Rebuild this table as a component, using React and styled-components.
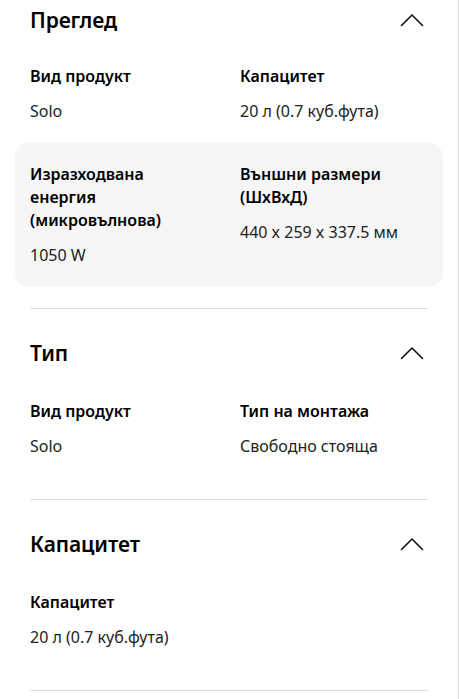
import React from 'react';
import styled, { createGlobalStyle } from 'styled-components';

const GlobalStyle = createGlobalStyle`
  html, body {
    margin: 0;
    padding: 0;
    background: #fff;
  }
  body {
    font-family: "Noto Sans", "Open Sans", Arial, sans-serif;
    color: #000;
  }
`;

const Page = styled.div`
  width: 459px;
  min-height: 699px;
  box-sizing: border-box;
  border-right: 1px solid #e2e2e2;
  padding: 0 30px;
`;

const Section = styled.section`
  padding-top: ${(p) => (p.$first ? '0' : '24px')};
  padding-bottom: 21px;
  border-bottom: 1px solid #dcdcdc;
`;

const Header = styled.div`
  display: flex;
  align-items: center;
  justify-content: space-between;
  height: 40px;
  margin-bottom: ${(p) => (p.$first ? '5px' : '7px')};
  padding-right: 4px;
`;

const Title = styled.h2`
  margin: 0;
  font-size: 21px;
  font-weight: 600;
  letter-spacing: -0.1px;
  line-height: 40px;
`;

const Row = styled.div`
  display: grid;
  grid-template-columns: 180px 1fr;
  column-gap: 30px;
  margin: 0 -15px;
  padding: 20px 15px;
  border-radius: 14px;
  background: ${(p) => (p.$shaded ? '#f6f6f6' : 'transparent')};
`;

const Spec = styled.div`
  display: flex;
  flex-direction: column;
  gap: 12px;
`;

const Label = styled.div`
  font-size: 16px;
  font-weight: 600;
  line-height: 23px;
`;

const Value = styled.div`
  font-size: 16px;
  font-weight: 400;
  line-height: 23px;
  color: #222;
`;

function Chevron() {
  return (
    <svg width="24" height="14" viewBox="0 0 24 14" fill="none">
      <path d="M1.5 12.5 L12 2 L22.5 12.5" stroke="#111" strokeWidth="1.6" strokeLinecap="round" strokeLinejoin="round" />
    </svg>
  );
}

const sections = [
  {
    title: 'Преглед',
    rows: [
      [
        ['Вид продукт', 'Solo'],
        ['Капацитет', '20 л (0.7 куб.фута)'],
      ],
      [
        ['Изразходвана енергия (микровълнова)', '1050 W'],
        ['Външни размери (ШхВхД)', '440 x 259 x 337.5 мм'],
      ],
    ],
  },
  {
    title: 'Тип',
    rows: [
      [
        ['Вид продукт', 'Solo'],
        ['Тип на монтажа', 'Свободно стояща'],
      ],
    ],
  },
  {
    title: 'Капацитет',
    rows: [[['Капацитет', '20 л (0.7 куб.фута)']]],
  },
];

export default function App() {
  return (
    <Page lang="bg">
      <GlobalStyle />
      {sections.map((s, i) => (
        <Section key={s.title} $first={i === 0}>
          <Header $first={i === 0}>
            <Title>{s.title}</Title>
            <Chevron />
          </Header>
          {s.rows.map((row, j) => (
            <Row key={j} $shaded={j % 2 === 1}>
              {row.map(([label, value]) => (
                <Spec key={label}>
                  <Label>{label}</Label>
                  <Value>{value}</Value>
                </Spec>
              ))}
            </Row>
          ))}
        </Section>
      ))}
    </Page>
  );
}
